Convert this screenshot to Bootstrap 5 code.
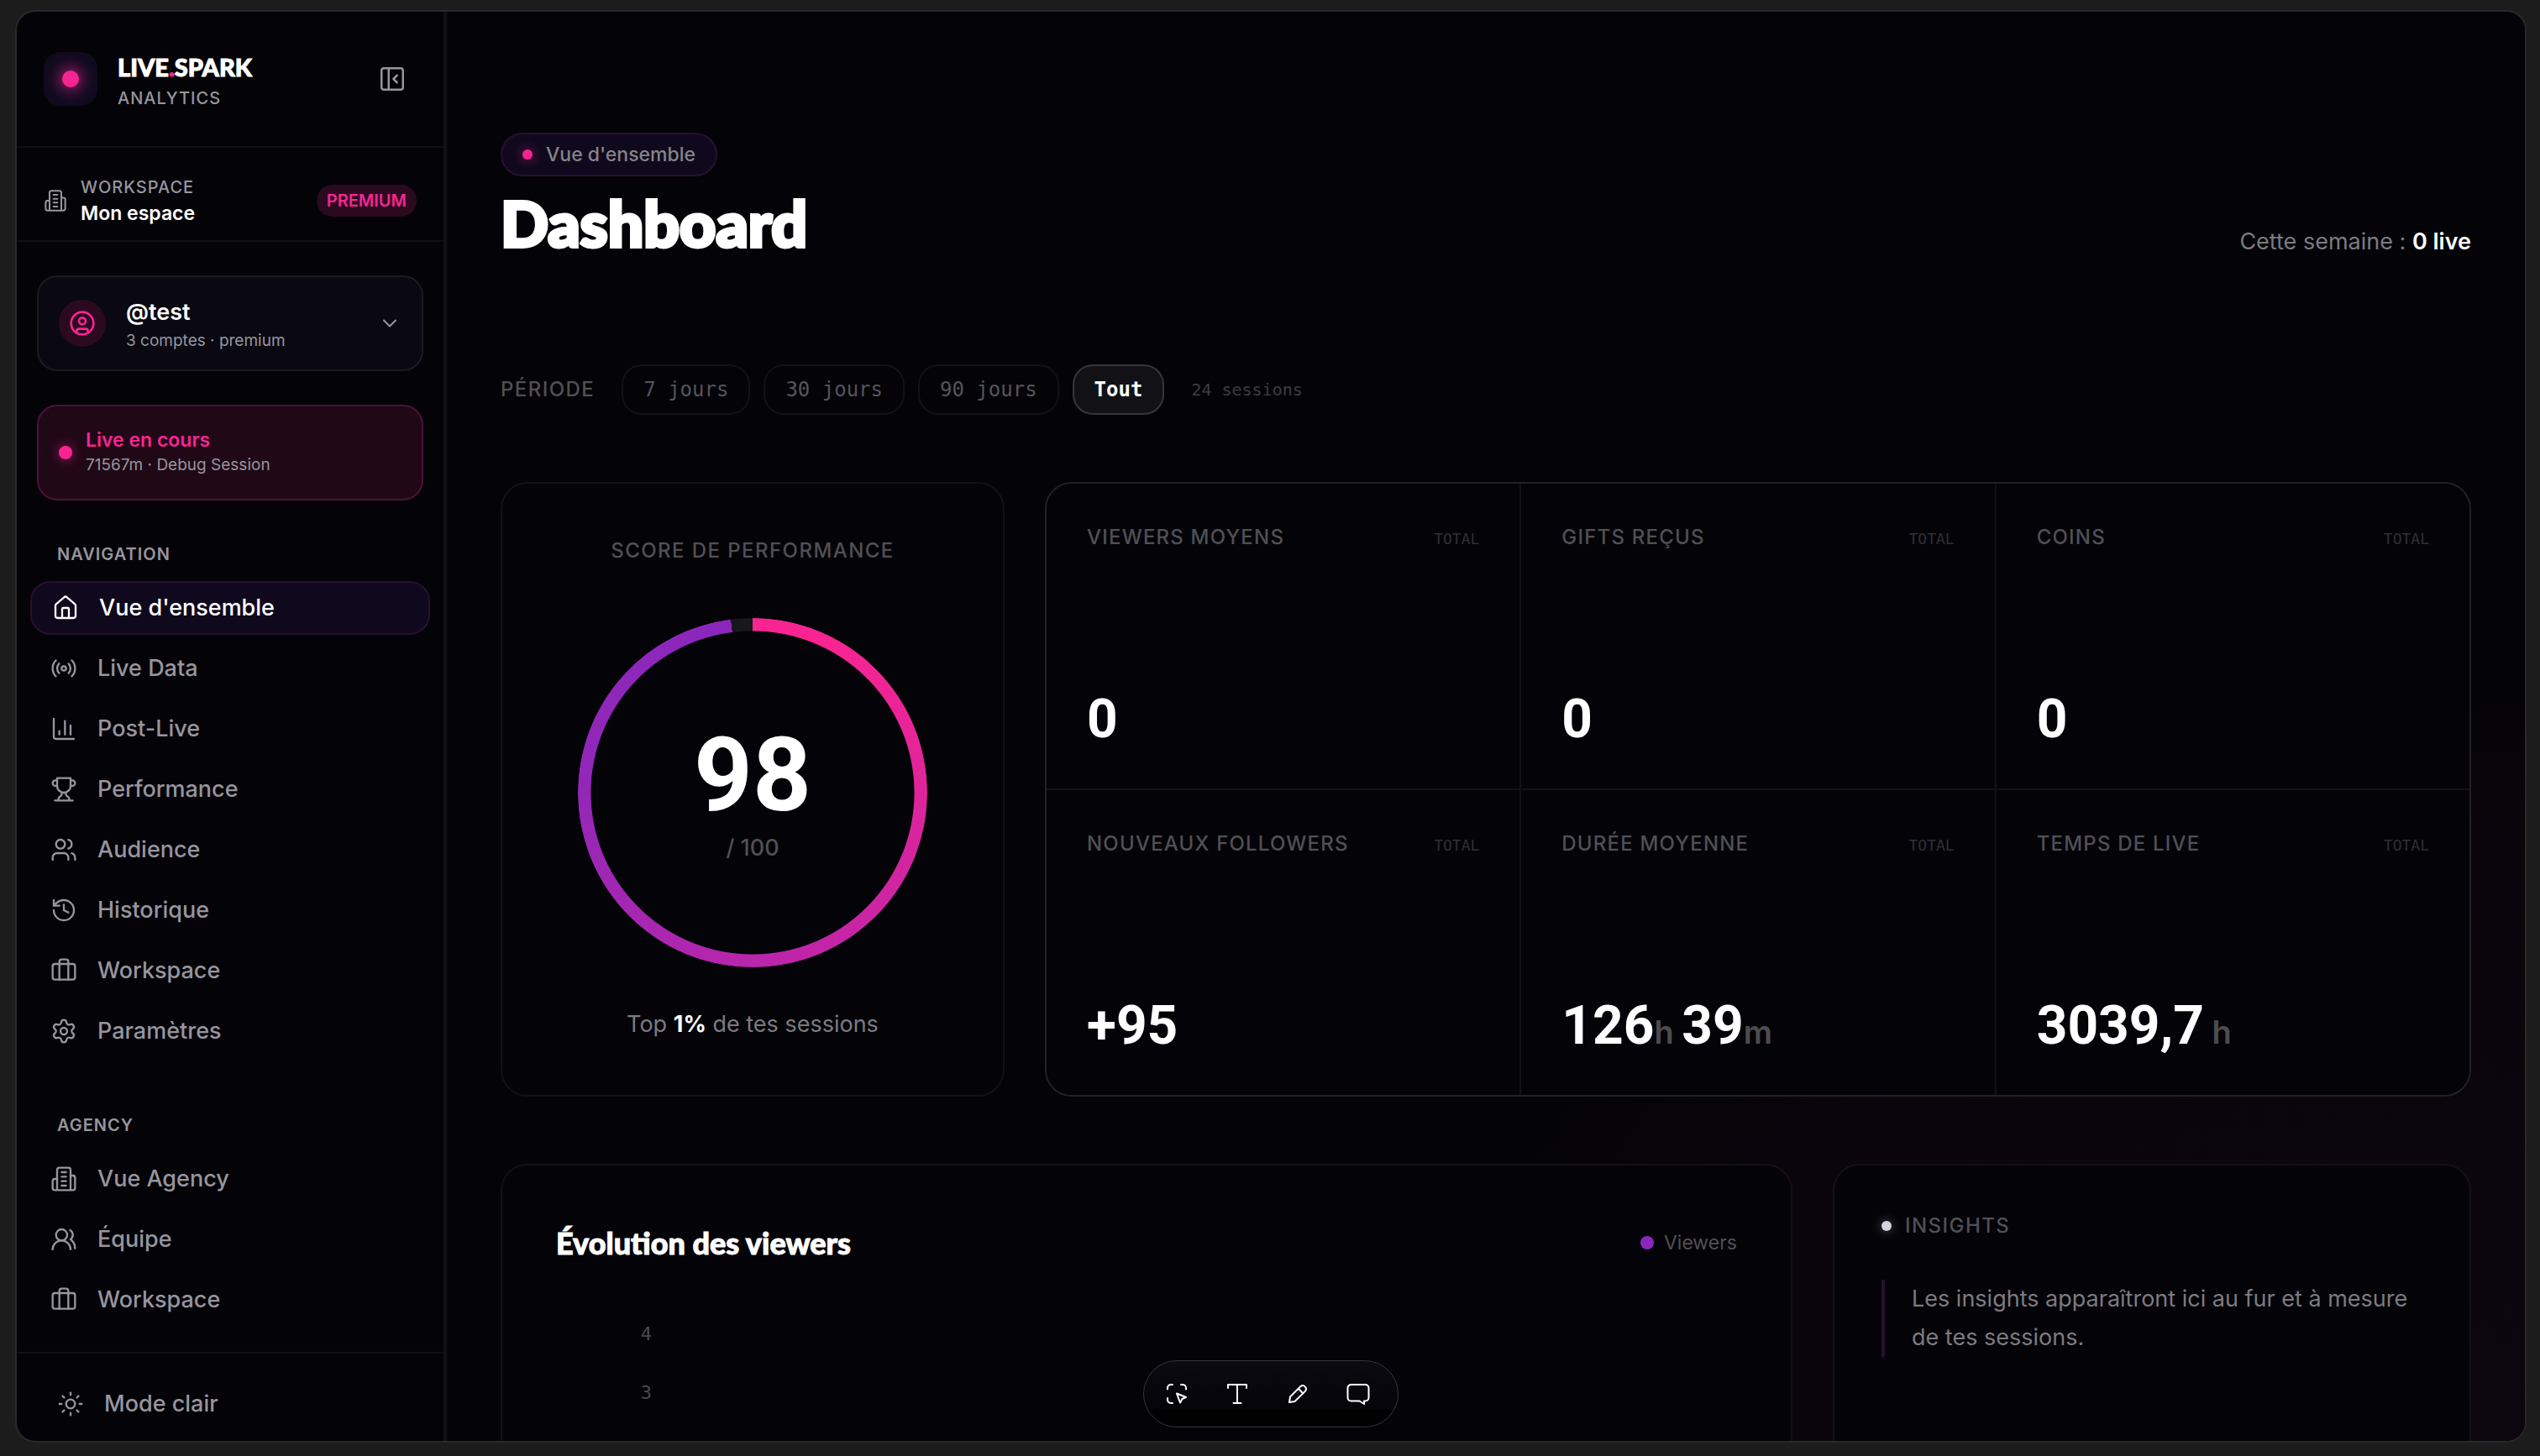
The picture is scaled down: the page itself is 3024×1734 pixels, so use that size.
<!DOCTYPE html>
<html lang="fr" data-bs-theme="dark">
<head>
<meta charset="utf-8">
<meta name="viewport" content="width=device-width, initial-scale=1">
<title>Live.Spark Analytics – Dashboard</title>
<link href="https://cdn.jsdelivr.net/npm/bootstrap@5.3.0/dist/css/bootstrap.min.css" rel="stylesheet">
<style>
  :root {
    --ink: #040308;
    --line: #121216;
    --line-strong: #222226;
    --pink: #f92492;
    --purple: #8b27bd;
    --muted: #97959e;
    --soft: #7c7b80;
    --dim: #505055;
    --tint: #10091d;
    --tint-line: #28102f;
  }
  body {
    background: #1c1c1c;
    color: #fff;
    font-family: Inter, sans-serif;
    font-size: 27px;
    line-height: 32px;
  }
  .mono { font-family: "DejaVu Sans Mono", monospace; }
  .display-font { font-family: Lato, sans-serif; font-weight: 900; -webkit-text-stroke: 1px currentColor; }
  svg { fill: none; stroke: currentColor; stroke-width: 1.75; stroke-linecap: round; stroke-linejoin: round; flex: none; }
  button { color: inherit; }

  .shell { padding: 12px 16px 16px 18px; }
  .app-frame { background: var(--ink); border: 2px solid #292929; border-radius: 24px; }

  /* Sidebar */
  .sidebar { width: 512px; border-right: 4px solid var(--line); }
  .brand-bar { padding: 39px 32px; border-bottom: 2px solid var(--line); }
  .brand-tile { width: 64px; height: 64px; border-radius: 20px; background: radial-gradient(circle, #4a1238 0, #2a0f2c 34%, #120a1f 62%, #0f091c 100%); }
  .brand-name { font-size: 29px; line-height: 38px; }
  .brand-text { line-height: 36px; }
  .collapse-btn { margin-right: 12px; color: var(--muted); }
  .eyebrow { font-size: 20px; letter-spacing: .05em; color: var(--muted); font-weight: 500; }
  .dot { width: 12px; height: 12px; border-radius: 50%; flex: none; background: var(--pink); box-shadow: 0 0 14px rgba(249, 36, 146, .6); }
  .dot-md { width: 16px; height: 16px; }
  .dot-lg { width: 20px; height: 20px; }
  .workspace-bar { padding: 32px 32px 16px; border-bottom: 2px solid var(--line); color: var(--muted); }
  .workspace-bar .eyebrow { line-height: 30px; }
  .text-md { font-size: 23px; }
  .text-sm { font-size: 19px; }
  .plan-pill { background: #2b0a20; color: var(--pink); font-size: 20px; line-height: 38px; padding: 0 12px; font-weight: 600; }
  .side-cards { padding: 40px 24px 0; gap: 40px; }
  .side-card { height: 114px; border-radius: 24px; padding: 0 24px; border: 2px solid #1c1b22; background: #0a0912; text-align: left; line-height: 34px; }
  .live-card { background: #200817; border-color: #4d1238; gap: 16px; line-height: 30px; }
  .avatar { width: 56px; height: 56px; background: #2b0a20; color: var(--pink); }
  .nav-label { padding: 0 32px; margin-bottom: 16px; font-weight: 600; }
  .side-nav { padding: 48px 16px 0; }
  .side-nav + .side-nav { padding-top: 64px; }
  .side-link { height: 64px; padding: 0 24px; gap: 24px; color: var(--muted); font-weight: 500; text-decoration: none; background: none; border: 0; border-radius: 24px; }
  .side-link.active { background: var(--tint); border: 2px solid var(--tint-line); color: #fff; }
  .side-foot { border-top: 2px solid var(--line); padding: 28px 24px 12px; }

  /* Main */
  .main-area { padding: 144px 64px 0; background: radial-gradient(ellipse 1300px 900px at 100% 100%, #0c060e 0, #0a050c 75%, rgba(8, 4, 11, 0) 100%) var(--ink); }
  .crumb { height: 52px; padding: 0 24px; gap: 16px; border-radius: 26px; border: 2px solid var(--tint-line); background: var(--tint); color: #858489; font-size: 23px; font-weight: 500; }
  .page-title { font-size: 75px; line-height: 78px; margin: 16px 0 0; -webkit-text-stroke-width: 4px; }
  .soft { color: var(--soft); }
  .caps { font-size: 24px; font-weight: 500; letter-spacing: .06em; color: var(--dim); }
  .period-row { margin: 130px 0 80px; gap: 16px; }
  .period-btn { height: 60px; padding: 0 24px; border: 2px solid var(--line); border-radius: 24px; background: none; color: #55555a; font-size: 24px; }
  .period-btn.active { background: #121216; border-color: #36363a; color: #fff; font-weight: 700; }
  .session-count { font-size: 20px; color: #3c3c41; }

  .panel { background: var(--ink); border: 2px solid var(--line); border-radius: 32px; }
  .top-row { gap: 48px; margin-bottom: 80px; }
  .score-panel { width: 600px; padding: 64px 32px; flex: none; }
  .ring { width: 416px; height: 416px; margin: 64px 0 48px; display: grid; place-items: center; }
  .ring > * { grid-area: 1 / 1; }
  .ring-arc { width: 100%; height: 100%; border-radius: 50%;
    background: conic-gradient(#f92492 0, #f92492 8%, #d9259d 28%, #b925ab 50%, #9327b8 75%, #8b27bd 98%, #18181b 98%);
    -webkit-mask: radial-gradient(closest-side, transparent 192px, #000 193px);
    mask: radial-gradient(closest-side, transparent 192px, #000 193px); }
  .figure { font-family: Roboto, sans-serif; font-weight: 700; }
  .score-value { font-size: 122px; line-height: 124px; }
  .kpi-grid { flex: 1; display: grid; grid-template-columns: repeat(3, 1fr); grid-template-rows: repeat(2, 1fr); gap: 2px; background: var(--line); border-color: var(--line-strong); overflow: hidden; }
  .kpi { background: var(--ink); padding: 48px; }
  .kpi .caps { letter-spacing: .05em; }
  .kpi-scope { font-size: 18px; color: #303035; }
  .kpi-value { font-size: 64px; line-height: 68px; }
  .unit { font-family: Inter, sans-serif; font-size: 38px; line-height: 38px; font-weight: 600; color: #4c4c50; }

  .bottom-row { gap: 48px; }
  .chart-panel { flex: 1; padding: 64px; min-height: 640px; }
  .chart-title { font-size: 36px; line-height: 56px; }
  .legend { gap: 12px; font-size: 23px; color: var(--dim); }
  .legend .dot { background: var(--purple); box-shadow: none; }
  .axis { width: 114px; margin-top: 46px; font-size: 22px; line-height: 70px; color: #4a4a4f; text-align: right; }
  .insight-panel { width: 760px; padding: 56px; flex: none; }
  .dot-white { background: #d3d5dc; box-shadow: 0 0 14px rgba(211, 213, 220, .45); }
  .insight-note { margin-top: 48px; padding-left: 32px; border-left: 4px solid var(--tint-line); line-height: 46px; }

  /* Floating toolbar */
  .tool-dock { position: absolute; left: 50%; bottom: 16px; transform: translateX(-50%); height: 80px; padding: 0 11px 0 3px; border-radius: 40px; border: 1px solid #35353a; background: linear-gradient(#0c0a12 0, #050409 74%, #000 75%); }
  .tool-btn { width: 72px; background: none; border: 0; padding: 0; }
  .tool-btn svg { stroke-width: 2; display: block; margin: 0 auto; }
</style>
<script src="https://cdn.jsdelivr.net/npm/bootstrap@5.3.0/dist/js/bootstrap.bundle.min.js"></script>
</head>
<body>
<svg class="d-none" aria-hidden="true">
  <symbol id="i-building" viewBox="0 0 24 24"><path d="M6 22V4a2 2 0 0 1 2-2h8a2 2 0 0 1 2 2v18ZM6 12H4a2 2 0 0 0-2 2v6a2 2 0 0 0 2 2h2M18 9h2a2 2 0 0 1 2 2v9a2 2 0 0 1-2 2h-2M10 6h4M10 10h4M10 14h4M10 18h4"/></symbol>
  <symbol id="i-briefcase" viewBox="0 0 24 24"><rect x="2" y="6" width="20" height="14" rx="2"/><path d="M16 20V4a2 2 0 0 0-2-2h-4a2 2 0 0 0-2 2v16"/></symbol>
</svg>

<div class="shell vh-100">
<div class="app-frame d-flex h-100 overflow-hidden position-relative">

  <aside class="sidebar d-flex flex-column flex-shrink-0">
    <div class="brand-bar d-flex align-items-center">
      <div class="brand-tile d-flex align-items-center justify-content-center me-4"><span class="dot dot-lg"></span></div>
      <div class="brand-text pt-2 flex-grow-1">
        <div class="brand-name display-font">LIVE<span style="color:var(--pink)">.</span>SPARK</div>
        <div class="eyebrow">ANALYTICS</div>
      </div>
      <button class="collapse-btn bg-transparent border-0 p-0 d-flex" aria-label="Réduire le menu">
        <svg width="34" height="34" viewBox="0 0 24 24"><rect x="3" y="3" width="18" height="18" rx="2"/><path d="M9 3v18M16 15l-3-3 3-3"/></svg>
      </button>
    </div>

    <div class="workspace-bar d-flex align-items-center gap-3">
      <svg width="28" height="28"><use href="#i-building"/></svg>
      <div class="flex-grow-1">
        <div class="eyebrow">WORKSPACE</div>
        <div class="text-md fw-semibold text-white">Mon espace</div>
      </div>
      <span class="plan-pill rounded-pill">PREMIUM</span>
    </div>

    <div class="side-cards d-flex flex-column">
      <button class="side-card d-flex align-items-center gap-4">
        <span class="avatar rounded-circle d-flex align-items-center justify-content-center">
          <svg width="32" height="32" viewBox="0 0 24 24" style="stroke-width:2"><circle cx="12" cy="12" r="10"/><circle cx="12" cy="10" r="3"/><path d="M7 20.662V19a2 2 0 0 1 2-2h6a2 2 0 0 1 2 2v1.662"/></svg>
        </span>
        <span class="flex-grow-1 pt-2">
          <span class="d-block fw-semibold">@test</span>
          <span class="d-block text-sm" style="color:var(--muted)">3 comptes · premium</span>
        </span>
        <svg width="28" height="28" viewBox="0 0 24 24" style="color:var(--muted)"><path d="m6 9 6 6 6-6"/></svg>
      </button>
      <div class="side-card live-card d-flex align-items-center">
        <span class="dot dot-md"></span>
        <div>
          <div class="text-md fw-semibold" style="color:var(--pink)">Live en cours</div>
          <div class="text-sm" style="color:var(--muted)">71567m · Debug Session</div>
        </div>
      </div>
    </div>

    <nav class="side-nav">
      <div class="nav-label eyebrow">NAVIGATION</div>
      <div class="d-flex flex-column gap-2">
        <a href="#" class="side-link active d-flex align-items-center"><svg width="32" height="32" viewBox="0 0 24 24"><path d="M15 21v-8a1 1 0 0 0-1-1h-4a1 1 0 0 0-1 1v8"/><path d="M3 10a2 2 0 0 1 .709-1.528l7-5.999a2 2 0 0 1 2.582 0l7 5.999A2 2 0 0 1 21 10v9a2 2 0 0 1-2 2H5a2 2 0 0 1-2-2z"/></svg>Vue d'ensemble</a>
        <a href="#" class="side-link d-flex align-items-center"><svg width="32" height="32" viewBox="0 0 24 24"><path d="M4.9 19.1C1 15.2 1 8.8 4.9 4.9M7.8 16.2c-2.3-2.3-2.3-6.1 0-8.5M16.2 7.8c2.3 2.3 2.3 6.1 0 8.5M19.1 4.9C23 8.8 23 15.1 19.1 19"/><circle cx="12" cy="12" r="2"/></svg>Live Data</a>
        <a href="#" class="side-link d-flex align-items-center"><svg width="32" height="32" viewBox="0 0 24 24"><path d="M3 3v16a2 2 0 0 0 2 2h16M18 17V9M13 17V5M8 17v-3"/></svg>Post-Live</a>
        <a href="#" class="side-link d-flex align-items-center"><svg width="32" height="32" viewBox="0 0 24 24"><path d="M6 9H4.5a2.5 2.5 0 0 1 0-5H6M18 9h1.500a2.500 2.500 0 0 0 0-5H18M4 22h16M10 14.660V17c0 .55-.47.98-.97 1.210C7.850 18.750 7 20.240 7 22M14 14.660V17c0 .55.47.98.97 1.210C16.150 18.750 17 20.240 17 22M18 2H6v7a6 6 0 0 0 12 0V2Z"/></svg>Performance</a>
        <a href="#" class="side-link d-flex align-items-center"><svg width="32" height="32" viewBox="0 0 24 24"><path d="M16 21v-2a4 4 0 0 0-4-4H6a4 4 0 0 0-4 4v2"/><circle cx="9" cy="7" r="4"/><path d="M22 21v-2a4 4 0 0 0-3-3.870M16 3.130a4 4 0 0 1 0 7.750"/></svg>Audience</a>
        <a href="#" class="side-link d-flex align-items-center"><svg width="32" height="32" viewBox="0 0 24 24"><path d="M3 12a9 9 0 1 0 9-9 9.750 9.750 0 0 0-6.740 2.740L3 8M3 3v5h5M12 7v5l4 2"/></svg>Historique</a>
        <a href="#" class="side-link d-flex align-items-center"><svg width="32" height="32"><use href="#i-briefcase"/></svg>Workspace</a>
        <a href="#" class="side-link d-flex align-items-center"><svg width="32" height="32" viewBox="0 0 24 24"><path d="M9.671 4.136a2.340 2.340 0 0 1 4.659 0 2.340 2.340 0 0 0 3.319 1.915 2.340 2.340 0 0 1 2.330 4.033 2.340 2.340 0 0 0 0 3.831 2.340 2.340 0 0 1-2.330 4.033 2.340 2.340 0 0 0-3.319 1.915 2.340 2.340 0 0 1-4.659 0 2.340 2.340 0 0 0-3.320-1.915 2.340 2.340 0 0 1-2.330-4.033 2.340 2.340 0 0 0 0-3.831A2.340 2.340 0 0 1 6.350 6.051a2.340 2.340 0 0 0 3.319-1.915"/><circle cx="12" cy="12" r="3"/></svg>Paramètres</a>
      </div>
    </nav>
    <nav class="side-nav">
      <div class="nav-label eyebrow">AGENCY</div>
      <div class="d-flex flex-column gap-2">
        <a href="#" class="side-link d-flex align-items-center"><svg width="32" height="32"><use href="#i-building"/></svg>Vue Agency</a>
        <a href="#" class="side-link d-flex align-items-center"><svg width="32" height="32" viewBox="0 0 24 24"><path d="M18 21a8 8 0 0 0-16 0"/><circle cx="10" cy="8" r="5"/><path d="M22 20c0-3.370-2-6.500-4-8a5 5 0 0 0-.45-8.300"/></svg>Équipe</a>
        <a href="#" class="side-link d-flex align-items-center"><svg width="32" height="32"><use href="#i-briefcase"/></svg>Workspace</a>
      </div>
    </nav>
    <div class="side-foot mt-auto">
      <button class="side-link d-flex align-items-center w-100"><svg width="32" height="32" viewBox="0 0 24 24"><circle cx="12" cy="12" r="4"/><path d="M12 2v2M12 20v2M4.930 4.930l1.410 1.410M17.660 17.660l1.410 1.410M2 12h2M20 12h2M6.340 17.660l-1.410 1.410M19.070 4.930l-1.410 1.410"/></svg>Mode clair</button>
    </div>
  </aside>

  <main class="main-area flex-grow-1 overflow-hidden">
    <header class="d-flex justify-content-between align-items-end">
      <div>
        <div class="crumb d-inline-flex align-items-center align-top"><span class="dot"></span>Vue d'ensemble</div>
        <h1 class="page-title display-font">Dashboard</h1>
      </div>
      <div class="soft">Cette semaine : <span class="fw-semibold text-white">0 live</span></div>
    </header>

    <div class="period-row d-flex align-items-center">
      <span class="caps me-3">PÉRIODE</span>
      <button class="period-btn mono">7 jours</button>
      <button class="period-btn mono">30 jours</button>
      <button class="period-btn mono">90 jours</button>
      <button class="period-btn mono active">Tout</button>
      <span class="session-count mono ms-3">24 sessions</span>
    </div>

    <div class="top-row d-flex">
      <section class="score-panel panel d-flex flex-column align-items-center">
        <div class="caps">SCORE DE PERFORMANCE</div>
        <div class="ring">
          <div class="ring-arc"></div>
          <div class="text-center">
            <div class="score-value figure">98</div>
            <div class="mt-2 fw-medium" style="color:var(--dim)">/ 100</div>
          </div>
        </div>
        <div class="soft py-1">Top <span class="fw-bold text-white">1%</span> de tes sessions</div>
      </section>

      <section class="kpi-grid panel">
        <div class="kpi d-flex flex-column justify-content-between">
          <div class="d-flex justify-content-between align-items-baseline"><span class="caps">VIEWERS MOYENS</span><span class="kpi-scope mono">TOTAL</span></div>
          <div class="kpi-value figure">0</div>
        </div>
        <div class="kpi d-flex flex-column justify-content-between">
          <div class="d-flex justify-content-between align-items-baseline"><span class="caps">GIFTS REÇUS</span><span class="kpi-scope mono">TOTAL</span></div>
          <div class="kpi-value figure">0</div>
        </div>
        <div class="kpi d-flex flex-column justify-content-between">
          <div class="d-flex justify-content-between align-items-baseline"><span class="caps">COINS</span><span class="kpi-scope mono">TOTAL</span></div>
          <div class="kpi-value figure">0</div>
        </div>
        <div class="kpi d-flex flex-column justify-content-between">
          <div class="d-flex justify-content-between align-items-baseline"><span class="caps">NOUVEAUX FOLLOWERS</span><span class="kpi-scope mono">TOTAL</span></div>
          <div class="kpi-value figure">+95</div>
        </div>
        <div class="kpi d-flex flex-column justify-content-between">
          <div class="d-flex justify-content-between align-items-baseline"><span class="caps">DURÉE MOYENNE</span><span class="kpi-scope mono">TOTAL</span></div>
          <div class="kpi-value figure">126<span class="unit">h </span>39<span class="unit">m</span></div>
        </div>
        <div class="kpi d-flex flex-column justify-content-between">
          <div class="d-flex justify-content-between align-items-baseline"><span class="caps">TEMPS DE LIVE</span><span class="kpi-scope mono">TOTAL</span></div>
          <div class="kpi-value figure">3039,7<span class="unit"> h</span></div>
        </div>
      </section>
    </div>

    <div class="bottom-row d-flex">
      <section class="chart-panel panel">
        <div class="d-flex justify-content-between align-items-center">
          <h2 class="chart-title display-font m-0">Évolution des viewers</h2>
          <div class="legend d-flex align-items-center"><span class="dot dot-md"></span>Viewers</div>
        </div>
        <div class="axis mono">
          <div>4</div>
          <div>3</div>
        </div>
      </section>
      <section class="insight-panel panel">
        <div class="caps d-flex align-items-center gap-3"><span class="dot dot-white"></span>INSIGHTS</div>
        <div class="insight-note soft">Les insights apparaîtront ici au fur et à mesure de tes sessions.</div>
      </section>
    </div>
  </main>

  <div class="tool-dock d-flex align-items-stretch" role="toolbar" aria-label="Outils">
    <button class="tool-btn" aria-label="Sélection"><svg width="28" height="28" viewBox="0 0 28 28"><path d="M3 8.500V7a4 4 0 0 1 4-4h2M19 3h2a4 4 0 0 1 4 4v1.500M3 19v2a4 4 0 0 0 4 4h2M14 13.500l11 4.500-4.500 2-2.500 4.500z"/></svg></button>
    <button class="tool-btn" aria-label="Texte"><svg width="28" height="28" viewBox="0 0 28 28"><path d="M3 7V3h22v4M14 3v22M9.500 25h9"/></svg></button>
    <button class="tool-btn" aria-label="Dessin"><svg width="28" height="28" viewBox="0 0 28 28"><path d="M4 24l1-6.500L17.500 5a4 4 0 0 1 5.600 5.600L10.500 23zM15 8l5.500 5.500"/></svg></button>
    <button class="tool-btn" aria-label="Commentaire"><svg width="28" height="28" viewBox="0 0 28 28"><path d="M5.500 3h17a4 4 0 0 1 4 4v11.500a4 4 0 0 1-4 4H21V26l-5.500-3.500h-10a4 4 0 0 1-4-4V7a4 4 0 0 1 4-4z"/></svg></button>
  </div>
</div>
</div>
</body>
</html>
